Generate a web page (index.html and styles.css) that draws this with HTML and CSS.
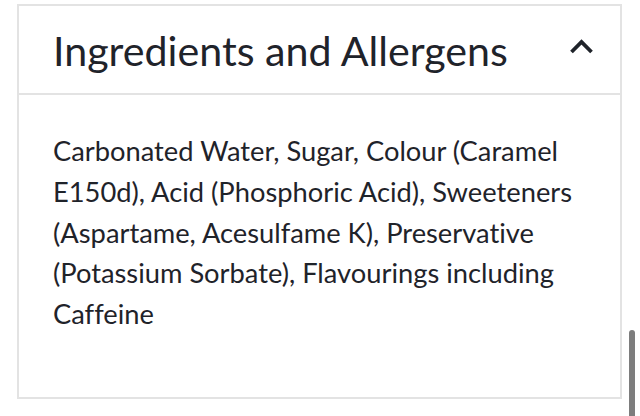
FILE: index.html
```html
<!DOCTYPE html>
<html lang="en">
  <head>
    <meta charset="UTF-8" />
    <meta name="viewport" content="width=device-width, initial-scale=1.0" />
    <title>Ingredients and Allergens</title>
    <link rel="stylesheet" href="styles.css">
  </head>
  <body>
    <section class="panel">
      <div class="panel-head">
        <h2 class="panel-title">Ingredients and Allergens</h2>
        <svg class="chevron" width="25" height="18" viewBox="0 0 25 18">
          <polyline points="2.5,15 12.5,5 22.5,15" fill="none" stroke="#1f232a" stroke-width="3.8" />
        </svg>
      </div>
      <div class="panel-body">
        <p>
          Carbonated Water, Sugar, Colour (Caramel E150d), Acid (Phosphoric
          Acid), Sweeteners (Aspartame, Acesulfame K), Preservative (Potassium
          Sorbate), Flavourings including Caffeine
        </p>
      </div>
    </section>
    <div class="scrollbar"></div>
  </body>
</html>
```

FILE: styles.css
```css
body {
  margin: 4px 18px 0 17px;
  font-family: Lato, "Liberation Sans", sans-serif;
  font-variant-ligatures: none;
  color: #1f232a;
  background: #fff;
  overflow: hidden;
}

.panel {
  border: 2px solid #e3e3e3;
  height: 391px;
  box-sizing: content-box;
}

.panel-head {
  display: flex;
  align-items: center;
  justify-content: space-between;
  height: 89px;
  box-sizing: border-box;
  padding: 2px 26px 0 34px;
  border-bottom: 2px solid #e3e3e3;
}

.panel-title {
  margin: 0;
  font-size: 41.2px;
  font-weight: 400;
  line-height: 1.2;
}

.chevron {
  display: block;
  margin-bottom: 10px;
}

.panel-body {
  padding: 36px 28px 0 34px;
}

.panel-body p {
  margin: 0;
  font-size: 27.3px;
  line-height: 40.8px;
}

.scrollbar {
  position: absolute;
  top: 330px;
  right: 5px;
  width: 6px;
  height: 100px;
  border-radius: 3px;
  background: #7d7d7d;
}
```
